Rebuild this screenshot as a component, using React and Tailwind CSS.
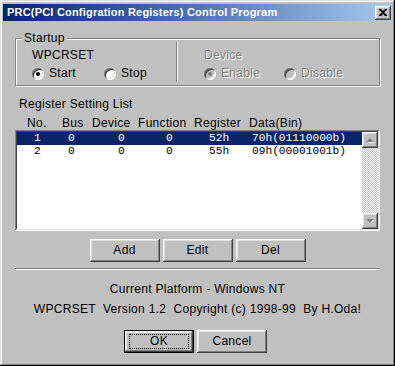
const raised =
  'bg-[#c0c0c0] shadow-[inset_-1px_-1px_#404040,inset_1px_1px_#ffffff,inset_-2px_-2px_#808080,inset_2px_2px_#dfdfdf]';
const sunken =
  'shadow-[inset_-1px_-1px_#ffffff,inset_1px_1px_#808080,inset_-2px_-2px_#dfdfdf,inset_2px_2px_#404040]';

function Radio({ checked, disabled, label, className = '' }) {
  return (
    <label className={`flex items-center gap-[5px] h-[13px] ${className}`}>
      <span
        className={`flex items-center justify-center w-[12px] h-[12px] rounded-full ${
          disabled ? 'bg-[#c0c0c0]' : 'bg-white'
        } shadow-[inset_1px_1px_#808080,inset_-1px_-1px_#ffffff,inset_2px_2px_#404040,inset_-2px_-2px_#dfdfdf]`}
      >
        {checked && (
          <span className={`w-[4px] h-[4px] rounded-full ${disabled ? 'bg-[#808080]' : 'bg-black'}`} />
        )}
      </span>
      <span className={disabled ? 'text-[#808080] [text-shadow:1px_1px_#ffffff]' : ''}>{label}</span>
    </label>
  );
}

function Button({ children, focused }) {
  if (focused) {
    return (
      <div className="w-[70px] h-[23px] border border-black">
        <div className={`w-full h-full ${raised} flex items-center justify-center`}>
          <div className="w-[60px] h-[15px] border border-dotted border-black flex items-center justify-center">
            {children}
          </div>
        </div>
      </div>
    );
  }
  return <div className={`w-[70px] h-[23px] ${raised} flex items-center justify-center`}>{children}</div>;
}

const rows = [
  { no: '1', bus: '0', dev: '0', fn: '0', reg: '52h', data: '70h(01110000b)' },
  { no: '2', bus: '0', dev: '0', fn: '0', reg: '55h', data: '09h(00001001b)' },
];

function App() {
  return (
    <div
      className="w-[395px] h-[366px] bg-[#c0c0c0] pt-[4px] px-[3px] flex flex-col text-[12px] leading-[13px] tracking-[0.3px] text-black shadow-[inset_-1px_-1px_#000000,inset_1px_1px_#dfdfdf,inset_-2px_-2px_#808080,inset_2px_2px_#ffffff]"
      style={{ fontFamily: '"Liberation Sans", Arial, sans-serif' }}
    >
      <div className="h-[17px] bg-gradient-to-r from-[#0a246a] to-[#a6caf0] flex items-center pl-[4px] pr-[1px]">
        <span className="font-bold text-white text-[11px] tracking-[0.2px]">
          PRC(PCI Configration Registers) Control Program
        </span>
        <div className={`ml-auto w-[16px] h-[14px] ${raised} flex items-center justify-center`}>
          <svg width="8" height="7" viewBox="0 0 8 7">
            <path d="M0 0h2l2 2 2-2h2v1L5 3.5 8 6v1H6L4 5 2 7H0V6l3-2.5L0 1z" fill="#000" />
          </svg>
        </div>
      </div>

      <div className="flex-1 flex flex-col px-[12px]">
        <div className="relative mt-[17px] h-[48px] border border-[#808080] shadow-[inset_1px_1px_#ffffff,1px_1px_#ffffff] flex">
          <span className="absolute -top-[7px] left-[6px] px-[2px] bg-[#c0c0c0]">Startup</span>
          <div className="w-[160px] flex flex-col pl-[16px] pt-[10px]">
            <div>WPCRSET</div>
            <div className="flex mt-[5px]">
              <Radio checked label="Start" className="w-[72px]" />
              <Radio label="Stop" />
            </div>
          </div>
          <div className="w-[2px] mt-[3px] mb-[3px] border-l border-[#808080] bg-white" />
          <div className="flex flex-col pl-[26px] pt-[10px]">
            <div className="text-[#808080] [text-shadow:1px_1px_#ffffff]">Device</div>
            <div className="flex mt-[5px]">
              <Radio disabled checked label="Enable" className="w-[80px]" />
              <Radio disabled label="Disable" />
            </div>
          </div>
        </div>

        <div className="mt-[12px] pl-[4px]">Register Setting List</div>
        <div className="flex mt-[6px] pl-[12px] whitespace-pre">
          <span className="w-[35px]">No.</span>
          <span className="w-[30px]">Bus</span>
          <span className="w-[46px]">Device</span>
          <span className="w-[56px]">Function</span>
          <span className="w-[55px]">Register</span>
          <span>Data(Bin)</span>
        </div>

        <div className={`h-[101px] bg-white p-[2px] flex ${sunken}`}>
          <div
            className="flex-1 flex flex-col text-[11.2px] leading-[13px] tracking-normal"
            style={{ fontFamily: '"Liberation Mono", "Courier New", monospace' }}
          >
            {rows.map((r, i) => (
              <div
                key={r.no}
                className={`flex h-[13px] pl-[17px] items-center ${i === 0 ? 'bg-[#0a246a] text-white' : ''}`}
              >
                <span className="w-[34px]">{r.no}</span>
                <span className="w-[50px]">{r.bus}</span>
                <span className="w-[48px]">{r.dev}</span>
                <span className="w-[43px]">{r.fn}</span>
                <span className="w-[43px]">{r.reg}</span>
                <span>{r.data}</span>
              </div>
            ))}
          </div>
          <div className="w-[16px] flex flex-col bg-[repeating-conic-gradient(#c0c0c0_0_25%,#ffffff_0_50%)] bg-[length:2px_2px]">
            <div className={`h-[16px] ${raised} flex items-center justify-center`}>
              <svg width="8" height="5" viewBox="0 0 8 5">
                <path d="M4 1L7 4H1z" fill="#ffffff" transform="translate(1 1)" />
                <path d="M4 0L7.5 4H0.5z" fill="#808080" />
              </svg>
            </div>
            <div className="flex-1" />
            <div className={`h-[16px] ${raised} flex items-center justify-center`}>
              <svg width="8" height="5" viewBox="0 0 8 5">
                <path d="M1 0h6L4 3z" fill="#ffffff" transform="translate(1 1)" />
                <path d="M0.5 0h7L4 4z" fill="#808080" />
              </svg>
            </div>
          </div>
        </div>

        <div className="flex justify-center gap-[3px] mt-[8px]">
          <Button>Add</Button>
          <Button>Edit</Button>
          <Button>Del</Button>
        </div>

        <div className="mt-[6px] h-[2px] border-t border-[#808080] border-b border-b-white" />

        <div className="text-center mt-[13px]">Current Platform - Windows NT</div>
        <div className="text-center mt-[7px] whitespace-pre">
          WPCRSET  Version 1.2  Copyright (c) 1998-99  By H.Oda!
        </div>

        <div className="flex justify-center gap-[3px] mt-[14px] pr-[4px]">
          <Button focused>OK</Button>
          <Button>Cancel</Button>
        </div>
      </div>
    </div>
  );
}

export default App;
